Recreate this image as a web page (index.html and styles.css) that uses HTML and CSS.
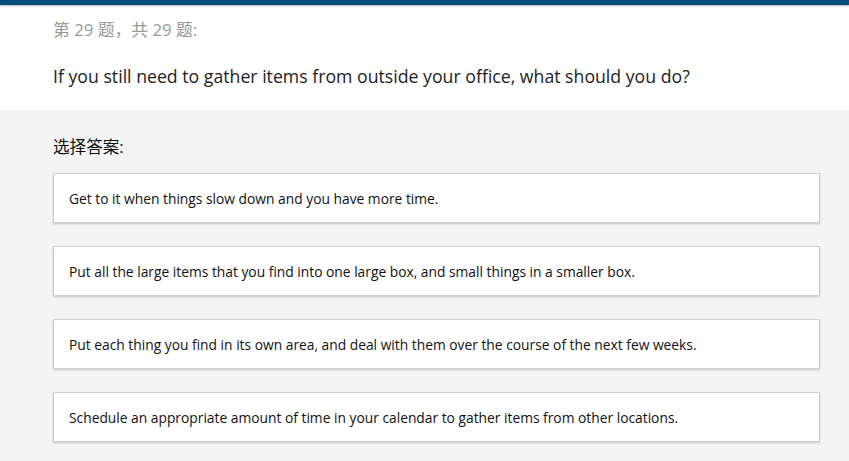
FILE: index.html
```html
<!DOCTYPE html>
<html>
<head>
<meta charset="utf-8">
<link rel="stylesheet" href="styles.css">
</head>
<body>
<div class="topbar"></div>
<header class="head">
  <div class="count">第 29 题，共 29 题:</div>
  <div class="question">If you still need to gather items from outside your office, what should you do?</div>
</header>
<main class="answers">
  <div class="label">选择答案:</div>
  <div class="opt">Get to it when things slow down and you have more time.</div>
  <div class="opt">Put all the large items that you find into one large box, and small things in a smaller box.</div>
  <div class="opt">Put each thing you find in its own area, and deal with them over the course of the next few weeks.</div>
  <div class="opt">Schedule an appropriate amount of time in your calendar to gather items from other locations.</div>
</main>
</body>
</html>
```
FILE: styles.css
```css
html, body {
  margin: 0;
  padding: 0;
  background: #f4f4f4;
  font-family: "Open Sans", "Noto Sans CJK SC", sans-serif;
  color: #222;
}
.topbar {
  height: 5px;
  background: #024b7c;
  box-shadow: 0 1px 2px rgba(0,0,0,0.3);
  position: relative;
}
.head {
  background: #fff;
  height: 105px;
  padding: 0 29px 0 53px;
  box-sizing: border-box;
}
.count {
  padding-top: 14px;
  font-size: 16.8px;
  line-height: 22px;
  color: #999;
}
.question {
  margin-top: 22px;
  font-size: 17.7px;
  line-height: 26px;
  color: #222;
}
.answers {
  padding: 25px 29px 0 53px;
}
.label {
  font-size: 16.6px;
  line-height: 24px;
  color: #111;
  margin-bottom: 14px;
}
.opt {
  background: #fff;
  border: 1px solid #cfcfcf;
  box-shadow: 0 1px 2px rgba(0,0,0,0.2);
  height: 48px;
  box-sizing: content-box;
  padding: 0 15px;
  display: flex;
  align-items: center;
  font-size: 13.8px;
  color: #111;
  margin-bottom: 23px;
}
```
